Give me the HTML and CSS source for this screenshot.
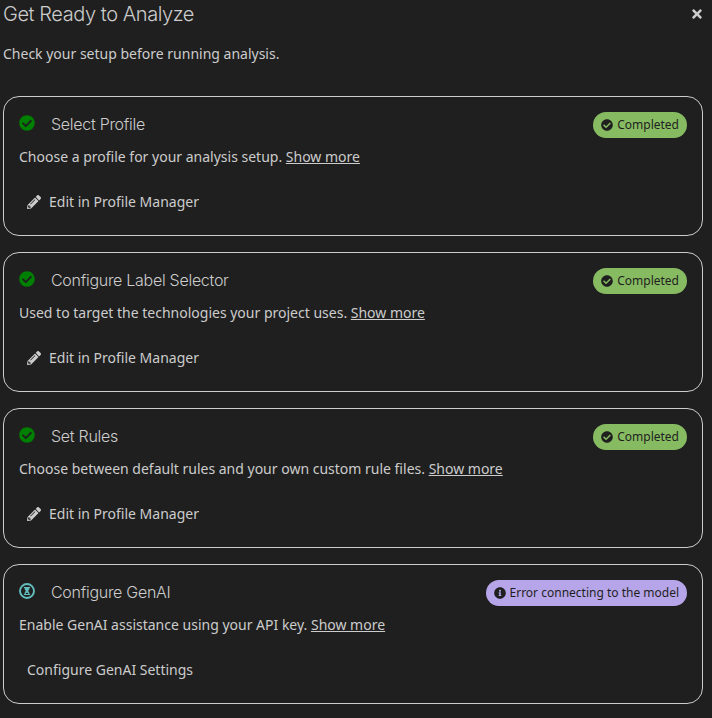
FILE: index.html
```html
<!DOCTYPE html>
<html lang="en">
<head>
<meta charset="utf-8">
<title>Get Ready to Analyze</title>
<link rel="stylesheet" href="styles.css">
</head>
<body>
<svg class="sprite" aria-hidden="true">
<symbol id="check" viewBox="0 0 512 512"><path d="M504 256c0 136.967-111.033 248-248 248S8 392.967 8 256 119.033 8 256 8s248 111.033 248 248zM227.314 387.314l184-184c6.248-6.248 6.248-16.379 0-22.627l-22.627-22.627c-6.248-6.249-16.379-6.249-22.628 0L216 308.118l-70.059-70.059c-6.248-6.248-16.379-6.248-22.628 0l-22.627 22.627c-6.248 6.248-6.248 16.379 0 22.627l104 104c6.249 6.249 16.379 6.249 22.628.001z"/></symbol>
<symbol id="info" viewBox="0 0 512 512"><path d="M256 8C119.043 8 8 119.083 8 256c0 136.997 111.043 248 248 248s248-111.003 248-248C504 119.083 392.957 8 256 8zm0 110c23.196 0 42 18.804 42 42s-18.804 42-42 42-42-18.804-42-42 18.804-42 42-42zm56 254c0 6.627-5.373 12-12 12h-88c-6.627 0-12-5.373-12-12v-24c0-6.627 5.373-12 12-12h12v-64h-12c-6.627 0-12-5.373-12-12v-24c0-6.627 5.373-12 12-12h64c6.627 0 12 5.373 12 12v100h12c6.627 0 12 5.373 12 12v24z"/></symbol>
<symbol id="pencil" viewBox="0 0 512 512"><path d="M497.9 142.1l-46.1 46.1c-4.7 4.7-12.3 4.7-17 0l-111-111c-4.7-4.7-4.7-12.3 0-17l46.1-46.1c18.7-18.7 49.1-18.7 67.9 0l60.1 60.1c18.8 18.7 18.8 49.1 0 67.9zM284.2 99.8L21.6 362.4.4 483.9c-2.9 16.4 11.4 30.6 27.8 27.8l121.5-21.3 262.6-262.6c4.7-4.7 4.7-12.3 0-17l-111-111c-4.8-4.7-12.4-4.7-17.1 0zM124.1 339.9c-5.5-5.5-5.5-14.3 0-19.8l154-154c5.5-5.5 14.3-5.5 19.8 0s5.5 14.3 0 19.8l-154 154c-5.5 5.5-14.3 5.5-19.8 0zM88 424h48v36.3l-64.5 11.3-31.1-31.1L51.7 376H88v48z"/></symbol>
<symbol id="times" viewBox="0 0 352 512"><path d="M242.72 256l100.07-100.07c12.28-12.28 12.28-32.19 0-44.48l-22.24-22.24c-12.28-12.28-32.19-12.28-44.48 0L176 189.28 75.93 89.21c-12.28-12.28-32.19-12.28-44.48 0L9.21 111.45c-12.28 12.28-12.28 32.19 0 44.48L109.28 256 9.21 356.07c-12.28 12.28-12.28 32.19 0 44.48l22.24 22.24c12.28 12.28 32.2 12.28 44.48 0L176 322.72l100.07 100.07c12.28 12.28 32.2 12.28 44.48 0l22.24-22.24c12.28-12.28 12.28-32.19 0-44.48L242.72 256z"/></symbol>
<symbol id="pending" viewBox="0 0 16 16"><circle cx="8" cy="8" r="7" fill="none" stroke="currentColor" stroke-width="1.9"/><path d="M4.9 4h6.2v1.1h-.7c0 1.3-.5 2.2-1.3 2.9.8.7 1.3 1.6 1.3 2.9h.7V12H4.9v-1.1h.7c0-1.3.5-2.2 1.3-2.9-.8-.7-1.3-1.6-1.3-2.9h-.7zM6.8 10.9h2.4c0-.7-.5-1.2-1.2-1.2s-1.2.5-1.2 1.2z" fill-rule="evenodd"/></symbol>
</svg>
<main class="drawer">
<header class="head">
<h1 class="title">Get Ready to Analyze</h1>
<button class="close" aria-label="Close"><svg><use href="#times"/></svg></button>
</header>
<p class="intro">Check your setup before running analysis.</p>
<div class="cards">
<section class="card">
<div class="card-head"><svg class="status done"><use href="#check"/></svg><h2 class="name">Select Profile</h2><span class="label green"><svg><use href="#check"/></svg>Completed</span></div>
<p class="desc">Choose a profile for your analysis setup. <a class="more">Show more</a></p>
<button class="action"><svg><use href="#pencil"/></svg>Edit in Profile Manager</button>
</section>
<section class="card">
<div class="card-head"><svg class="status done"><use href="#check"/></svg><h2 class="name">Configure Label Selector</h2><span class="label green"><svg><use href="#check"/></svg>Completed</span></div>
<p class="desc">Used to target the technologies your project uses. <a class="more">Show more</a></p>
<button class="action"><svg><use href="#pencil"/></svg>Edit in Profile Manager</button>
</section>
<section class="card">
<div class="card-head"><svg class="status done"><use href="#check"/></svg><h2 class="name">Set Rules</h2><span class="label green"><svg><use href="#check"/></svg>Completed</span></div>
<p class="desc">Choose between default rules and your own custom rule files. <a class="more">Show more</a></p>
<button class="action"><svg><use href="#pencil"/></svg>Edit in Profile Manager</button>
</section>
<section class="card">
<div class="card-head"><svg class="status pending"><use href="#pending"/></svg><h2 class="name">Configure GenAI</h2><span class="label purple"><svg><use href="#info"/></svg>Error connecting to the model</span></div>
<p class="desc">Enable GenAI assistance using your API key. <a class="more">Show more</a></p>
<button class="action">Configure GenAI Settings</button>
</section>
</div>
</main>
</body>
</html>
```
FILE: styles.css
```css
* { box-sizing: border-box; margin: 0; padding: 0; }
body { background: #1f1f1f; color: #ccc; font: 14px/21px "Noto Sans", sans-serif; overflow: hidden; }
svg { fill: currentColor; flex: none; display: block; }
.sprite { position: absolute; width: 0; height: 0; }
button { background: none; border: 0; color: inherit; font: inherit; }
.drawer { padding: 0 9px 0 3px; }
.head { display: flex; justify-content: space-between; height: 28px; }
.title { font: 300 20px/28px Inter, sans-serif; letter-spacing: -0.43px; }
.close { width: 12px; height: 28px; display: flex; align-items: center; justify-content: center; }
.close svg { width: 10px; height: 14px; }
.intro { margin-top: 15px; }
.cards { display: grid; gap: 16px; margin-top: 32px; }
.card { height: 140px; border: 1px solid #ccc; border-radius: 16px; padding: 15px; }
.card-head { display: flex; height: 26px; }
.status { width: 16px; height: 16px; margin: 3px 16px 0 0; }
.done { color: #008000; }
.pending { color: #63bdbd; }
.name { flex: 1; font: 300 16px/24px Inter, sans-serif; letter-spacing: -0.28px; }
.label { display: flex; align-items: center; gap: 4px; height: 26px; padding: 0 8px; border-radius: 13px; font-size: 12px; line-height: 18px; color: #1f1f1f; }
.label svg { width: 12px; height: 12px; }
.green { background: #87bb62; }
.purple { background: #b6a6e9; }
.desc { margin-top: 8px; }
.more { text-decoration: underline; }
.action { display: flex; align-items: center; gap: 8px; height: 37px; padding: 0 8px; margin-top: 16px; }
.action svg { width: 14px; height: 14px; }
```
